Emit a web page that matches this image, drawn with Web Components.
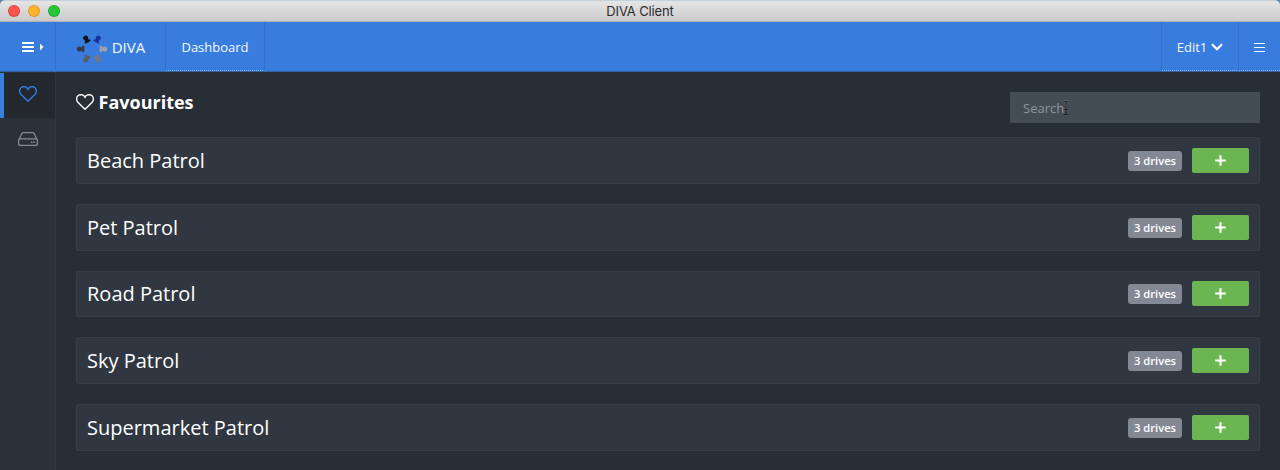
<!DOCTYPE html>
<html lang="en">
<head>
<meta charset="utf-8">
<title>DIVA Client</title>
<style>
html,body{margin:0;height:100%;overflow:hidden;background:#282e36}
body{font-family:"Open Sans","Noto Sans",sans-serif;color:#fff}
</style>
</head>
<body>
<diva-app></diva-app>
<script>
const define=(name,html)=>customElements.define(name,class extends HTMLElement{
  connectedCallback(){
    if(this.shadowRoot)return;
    const t=document.createElement('template');
    t.innerHTML=html;
    this.attachShadow({mode:'open'}).append(t.content.cloneNode(true));
  }
});

define('title-bar',`<style>
:host{display:grid;grid-template-columns:1fr auto 1fr;align-items:center;height:22px;box-sizing:border-box;background:linear-gradient(#e6e5e6,#cbcbcb);border-top:1px solid #c3cfda;border-bottom:1px solid #b5b0b2;border-radius:5px 5px 0 0}
.lights{display:flex;gap:8px;padding-left:8px}
i{width:12px;height:12px;border-radius:50%;box-sizing:border-box;border:.5px solid #0002}
.t{font:13px/20px Inter,"Liberation Sans",sans-serif;letter-spacing:-.14px;color:#2c2b2d}
</style><div class="lights"><i style="background:#fc544e"></i><i style="background:#fdb42c"></i><i style="background:#24c637"></i></div><span class="t"><slot></slot></span>`);

define('diva-logo',`<style>:host{display:block;width:32px;height:30px}svg{display:block}</style>
<svg width="32" height="30" viewBox="-16 -15 32 30"><defs><g id="p"><circle cx="12.600" cy="0" r="2.500"/><path d="M11-1.300 10.200-1.500 9.700-2.900Q9.200-3.400 8-3.100L7.700-2.500V2.500L8 3.100Q9.200 3.400 9.700 2.900L10.200 1.500 11 1.300Z"/></g></defs>
<use href="#p" fill="#a4a2a8"/><use href="#p" fill="#77777f" transform="rotate(60)"/><use href="#p" fill="#5c5d64" transform="rotate(120)"/><use href="#p" fill="#353942" transform="rotate(180)"/><use href="#p" fill="#0c1119" transform="rotate(240)"/><use href="#p" fill="#1d319c" transform="rotate(300)"/></svg>`);

define('nav-cell',`<style>
:host{display:flex;align-items:center;justify-content:center;box-sizing:border-box;height:50px;border-right:1px solid #3470c5;font-size:13px;line-height:20px;color:#f4f8ff}
:host([dotted]){background:repeating-linear-gradient(90deg,#83aeeb 0 1px,transparent 1px 2px) 0 48px/100% 1px no-repeat}
:host([last]){border-right:0}
</style><slot></slot>`);

define('nav-bar',`<style>
:host{display:flex;height:50px;box-sizing:border-box;background:#387dde;border-bottom:1px solid #33629f}
.sp{flex:1;border-right:1px solid #3470c5}
svg{display:block}
.menu{width:56px}.brand{width:110px}.dash{width:99px}.edit{width:77px}.more{width:41px}
.brand b{font-weight:400;font-size:15px;margin-left:4px}
diva-logo{margin-top:3px}
</style>
<nav-cell class="menu"><svg width="22" height="12" style="margin-left:11px" viewBox="0 0 22 12" fill="#fff"><path d="M0 1h12v2H0zM0 5h12v2H0zM0 9h12v2H0zM18 2.500l3.500 3.500L18 9.500z"/></svg></nav-cell>
<nav-cell class="brand"><diva-logo></diva-logo><b>DIVA</b></nav-cell>
<nav-cell class="dash" dotted>Dashboard</nav-cell>
<div class="sp"></div>
<nav-cell class="edit" dotted><span>Edit1</span><svg width="12" height="8" viewBox="0 0 12 8" style="margin-left:4px" fill="none" stroke="#fff" stroke-width="2.200"><path d="M1 1.200 6 6.200l5-5"/></svg></nav-cell>
<nav-cell class="more" dotted last><svg width="11" height="10" viewBox="0 0 11 10" fill="#f4f8ff" style="margin-top:1px"><path d="M0 0h11v1H0zM0 4h11v1H0zM0 8h11v1H0z"/></svg></nav-cell>`);

define('heart-icon',`<style>:host{display:block;width:18px;height:16px}svg{display:block}</style>
<svg width="18" height="16" viewBox="0 0 18 16" fill="none" stroke="currentColor" stroke-width="1.400" stroke-linejoin="round"><path d="M9 15.200 1.800 8.200C-.2 5.700.4 2.500 2.800 1.200 5.200 0 8 1 9 3.500 10 1 12.800 0 15.200 1.200c2.400 1.300 3 4.500 1 7Z"/></svg>`);

define('drive-icon',`<style>:host{display:block;width:20px;height:14px}svg{display:block}</style>
<svg width="20" height="14" viewBox="0 0 20 14" fill="none" stroke="currentColor" stroke-width="1.250" stroke-linejoin="round"><path d="M.8 8.100 4 1.300Q4.400.6 5.200.6h9.600q.8 0 1.200.7l3.200 6.800M2 6.800h16q1.400 0 1.400 1.400v3.800q0 1.400-1.400 1.400H2Q.6 13.400.6 12V8.200Q.6 6.800 2 6.800Z"/><path d="M13 10.200h1.500M15.500 10.200H17" stroke-width="1.400"/></svg>`);

define('side-bar',`<style>
:host{display:flex;flex-direction:column;width:56px;box-sizing:border-box;background:#2b3139;border-right:1px solid #30373f}
div{height:46px;display:flex;align-items:center;justify-content:center;box-sizing:border-box;color:#858b93;padding-bottom:4px}
.on{background:#23272e;border-left:4px solid #387fde;color:#387fde;padding-right:3px;padding-bottom:3px;height:45px;margin-top:1px}
.on heart-icon{margin-bottom:1px}
</style><div class="on"><heart-icon></heart-icon></div><div><drive-icon></drive-icon></div>`);

define('search-box',`<style>
:host{display:flex;align-items:center;position:relative;box-sizing:border-box;width:250px;height:31px;padding-left:13px;background:#444d56;color:#8f949a;font-size:13px}
svg{position:absolute;left:52px;top:8px}
</style><slot></slot><svg width="8" height="16" viewBox="0 0 8 16" fill="none"><path d="M1 1Q3.500 1 4 2.500 4.500 1 7 1M4 2v12M1 15q2.500 0 3-1.500.5 1.500 3 1.500M2.500 9.500h3" stroke="#777e86" stroke-width="2"/><path d="M1 1Q3.500 1 4 2.500 4.500 1 7 1M4 2v12M1 15q2.500 0 3-1.500.5 1.500 3 1.500M2.500 9.500h3" stroke="#15191e" stroke-width="1.200"/></svg>`);

define('patrol-row',`<style>
:host{display:flex;align-items:center;box-sizing:border-box;height:46.800px;padding:0 10px;background:#303740;border:1px solid #363e47;border-radius:2px}
.n{flex:1;font-size:20px;line-height:28px;padding-top:.8px}
.d{box-sizing:border-box;width:54px;height:20px;border-radius:3px;background:#838994;font-size:11.200px;font-weight:600;line-height:20px;text-align:center;margin:.8px 10px 0 0}
button{display:flex;align-items:center;justify-content:center;width:57px;height:25px;padding:0;border:0;border-radius:2px;background:#6cb651}
</style><span class="n"><slot></slot></span><span class="d">3 drives</span><button aria-label="Add"><svg width="11" height="11" viewBox="0 0 11 11"><path d="M5.500.2v10.600M.2 5.500h10.600" stroke="#fff" stroke-width="2.200"/></svg></button>`);

define('diva-app',`<style>
:host{display:flex;flex-direction:column;height:470px;width:1280px;background:linear-gradient(#5d819e 0 22px,#282e36 22px)}
.body{flex:1;display:flex;min-height:0}
main{flex:1;padding:20px;box-sizing:border-box}
header{display:flex;justify-content:space-between;height:45px}
h1{display:flex;align-items:center;gap:4.500px;margin:0;height:20px;font-size:18px;line-height:20px;font-weight:700}
.list{display:flex;flex-direction:column;gap:20px}
</style>
<title-bar>DIVA Client</title-bar><nav-bar></nav-bar>
<div class="body"><side-bar></side-bar><main><header><h1><heart-icon></heart-icon><span>Favourites</span></h1><search-box>Search</search-box></header>
<div class="list"><patrol-row>Beach Patrol</patrol-row><patrol-row>Pet Patrol</patrol-row><patrol-row>Road Patrol</patrol-row><patrol-row>Sky Patrol</patrol-row><patrol-row>Supermarket Patrol</patrol-row></div></main></div>`);
</script>
</body>
</html>
